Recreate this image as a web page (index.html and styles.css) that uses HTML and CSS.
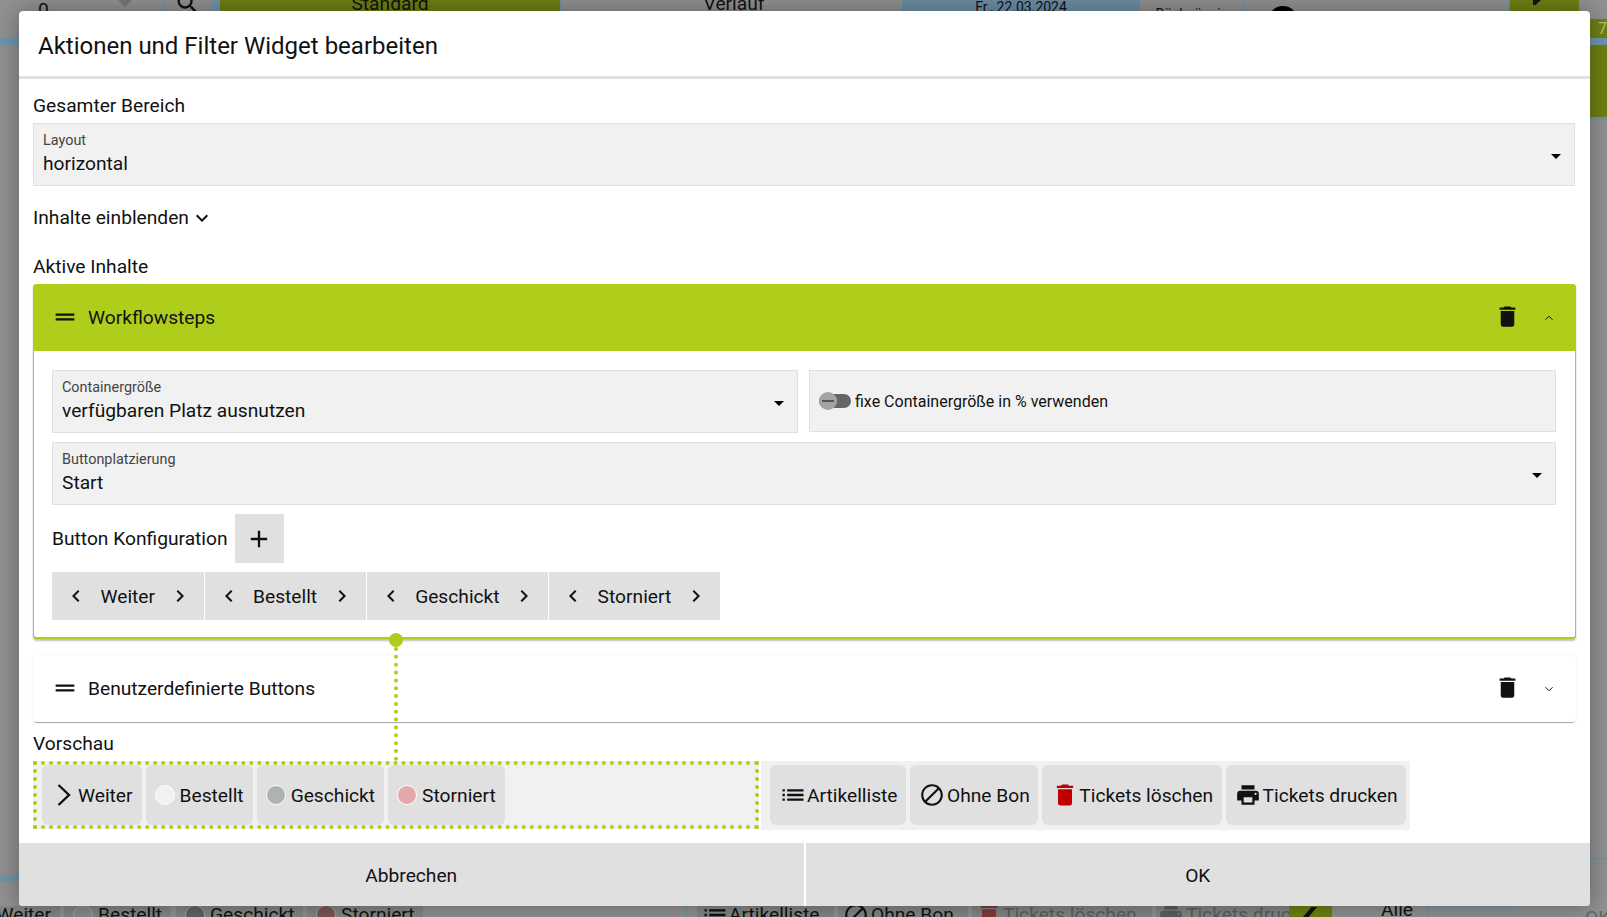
FILE: index.html
```html
<!DOCTYPE html>
<html lang="de">
<head>
<meta charset="utf-8">
<title>Aktionen und Filter Widget bearbeiten</title>
<link rel="stylesheet" href="styles.css">
</head>
<body>
<div class="page">
  <div class="bg-top">
    <div class="bg-cell bg-count">0<span class="bg-tri"></span></div>
    <div class="bg-cell bg-search"><svg class="bg-search-icon" viewBox="0 0 24 24"><path d="M9.5,3A6.5,6.5 0 0,1 16,9.5C16,11.11 15.41,12.59 14.44,13.73L14.71,14H15.5L20.5,19L19,20.5L14,15.5V14.71L13.73,14.44C12.59,15.41 11.11,16 9.5,16A6.5,6.5 0 0,1 3,9.5A6.5,6.5 0 0,1 9.5,3M9.5,5C7,5 5,7 5,9.5C5,12 7,14 9.5,14C12,14 14,12 14,9.5C14,7 12,5 9.5,5Z"/></svg></div>
    <div class="bg-cell bg-standard">Standard</div>
    <div class="bg-cell bg-verlauf">Verlauf</div>
    <div class="bg-cell bg-date">Fr., 22.03.2024</div>
    <div class="bg-cell bg-undo">Rückgängig</div>
    <div class="bg-cell bg-user"><span class="bg-user-head"></span></div>
    <div class="bg-cell bg-edit"><span class="bg-edit-mark"></span></div>
  </div>
  <div class="bg-row-seven"><span class="bg-seven">7</span></div>
  <div class="bg-strip"></div>
  <div class="bg-olive-block"></div>
  <div class="bg-thin"></div>
  <div class="bg-spacer"></div>
  <div class="bg-right-line"></div>
  <div class="bg-left-strip"></div>
  <div class="bg-bottom">
    <span class="bg-chip bg-chip-first">Weiter</span>
    <span class="bg-chip bg-chip-a"><i class="bg-dot bg-dot-a"></i>Bestellt</span>
    <span class="bg-chip bg-chip-b"><i class="bg-dot bg-dot-b"></i>Geschickt</span>
    <span class="bg-chip bg-chip-c"><i class="bg-dot bg-dot-c"></i>Storniert</span>
    <span class="bg-sep"></span>
    <span class="bg-chip bg-chip-list"><svg class="bg-icon-lg" viewBox="0 0 24 24"><path d="M3 13h2v-2H3v2zm0 4h2v-2H3v2zm0-8h2V7H3v2zm4 4h14v-2H7v2zm0 4h14v-2H7v2zM7 7v2h14V7H7z"/></svg>Artikelliste</span>
    <span class="bg-chip bg-chip-bon"><svg class="bg-icon-md" viewBox="0 0 24 24"><path d="M12 2C6.48 2 2 6.48 2 12s4.48 10 10 10 10-4.48 10-10S17.52 2 12 2zM4 12c0-4.42 3.58-8 8-8 1.85 0 3.55.63 4.9 1.69L5.69 16.9C4.63 15.55 4 13.85 4 12zm8 8c-1.85 0-3.55-.63-4.9-1.69L18.31 7.1C19.37 8.45 20 10.15 20 12c0 4.42-3.58 8-8 8z"/></svg>Ohne Bon</span>
    <span class="bg-chip bg-chip-del"><svg class="bg-icon-lg bg-icon-red" viewBox="0 0 24 24"><path d="M19,4H15.5L14.5,3H9.5L8.5,4H5V6H19M6,19A2,2 0 0,0 8,21H16A2,2 0 0,0 18,19V7H6V19Z"/></svg>Tickets löschen</span>
    <span class="bg-chip bg-chip-print"><svg class="bg-icon-md" viewBox="0 0 24 24"><path d="M18,3H6V7H18M19,12A1,1 0 0,1 18,11A1,1 0 0,1 19,10A1,1 0 0,1 20,11A1,1 0 0,1 19,12M16,19H8V14H16M19,8H5A3,3 0 0,0 2,11V17H6V21H18V17H22V11A3,3 0 0,0 19,8Z"/></svg>Tickets drucken</span>
    <span class="bg-pencil"><span class="bg-pencil-mark"></span></span>
    <span class="bg-alle">Alle</span>
    <span class="bg-box"></span>
    <span class="bg-ok">OK</span>
  </div>
</div>

<section class="modal">
  <header class="modal-head">Aktionen und Filter Widget bearbeiten</header>
  <div class="modal-body">
    <div class="section-label first-label">Gesamter Bereich</div>
    <div class="select select-top">
      <div class="select-text">
        <div class="select-label">Layout</div>
        <div class="select-value">horizontal</div>
      </div>
      <span class="caret"></span>
    </div>
    <div class="section-label toggle-line">Inhalte einblenden
      <svg class="icon-down" viewBox="0 0 24 24"><path d="M7.41,8.58L12,13.17L16.59,8.58L18,10L12,16L6,10L7.41,8.58Z"/></svg>
    </div>
    <div class="section-label active-label">Aktive Inhalte</div>

    <article class="panel panel-open">
      <div class="panel-head panel-head-green">
        <svg class="icon-drag" viewBox="0 0 24 24"><path d="M20 9H4v2h16V9zM4 15h16v-2H4v2z"/></svg>
        <span class="panel-title">Workflowsteps</span>
        <svg class="icon-trash" viewBox="0 0 24 24"><path d="M19,4H15.5L14.5,3H9.5L8.5,4H5V6H19M6,19A2,2 0 0,0 8,21H16A2,2 0 0,0 18,19V7H6V19Z"/></svg>
        <svg class="icon-fold" viewBox="0 0 24 24"><path d="M5 15.5L12 8.5L19 15.5"/></svg>
      </div>
      <div class="panel-content">
        <div class="field-row">
          <div class="select">
            <div class="select-text">
              <div class="select-label">Containergröße</div>
              <div class="select-value">verfügbaren Platz ausnutzen</div>
            </div>
            <span class="caret"></span>
          </div>
          <div class="switch-field">
            <span class="switch"><span class="switch-knob"><span class="switch-dash"></span></span></span>
            <span class="switch-text">fixe Containergröße in % verwenden</span>
          </div>
        </div>
        <div class="select">
          <div class="select-text">
            <div class="select-label">Buttonplatzierung</div>
            <div class="select-value">Start</div>
          </div>
          <span class="caret"></span>
        </div>
        <div class="config-row">
          <span class="config-label">Button Konfiguration</span>
          <span class="add-btn"><svg class="icon-plus" viewBox="0 0 24 24"><path d="M19,13H13V19H11V13H5V11H11V5H13V11H19V13Z"/></svg></span>
        </div>
        <div class="order-row">
          <div class="order-chip">
            <svg class="icon-order" viewBox="0 0 24 24"><path d="M15.41,16.58L10.83,12L15.41,7.41L14,6L8,12L14,18L15.41,16.58Z"/></svg><span>Weiter</span><svg class="icon-order" viewBox="0 0 24 24"><path d="M8.59,16.58L13.17,12L8.59,7.41L10,6L16,12L10,18L8.59,16.58Z"/></svg>
          </div>
          <div class="order-chip">
            <svg class="icon-order" viewBox="0 0 24 24"><path d="M15.41,16.58L10.83,12L15.41,7.41L14,6L8,12L14,18L15.41,16.58Z"/></svg><span>Bestellt</span><svg class="icon-order" viewBox="0 0 24 24"><path d="M8.59,16.58L13.17,12L8.59,7.41L10,6L16,12L10,18L8.59,16.58Z"/></svg>
          </div>
          <div class="order-chip">
            <svg class="icon-order" viewBox="0 0 24 24"><path d="M15.41,16.58L10.83,12L15.41,7.41L14,6L8,12L14,18L15.41,16.58Z"/></svg><span>Geschickt</span><svg class="icon-order" viewBox="0 0 24 24"><path d="M8.59,16.58L13.17,12L8.59,7.41L10,6L16,12L10,18L8.59,16.58Z"/></svg>
          </div>
          <div class="order-chip">
            <svg class="icon-order" viewBox="0 0 24 24"><path d="M15.41,16.58L10.83,12L15.41,7.41L14,6L8,12L14,18L15.41,16.58Z"/></svg><span>Storniert</span><svg class="icon-order" viewBox="0 0 24 24"><path d="M8.59,16.58L13.17,12L8.59,7.41L10,6L16,12L10,18L8.59,16.58Z"/></svg>
          </div>
        </div>
      </div>
    </article>

    <article class="panel panel-closed">
      <div class="panel-head">
        <svg class="icon-drag" viewBox="0 0 24 24"><path d="M20 9H4v2h16V9zM4 15h16v-2H4v2z"/></svg>
        <span class="panel-title">Benutzerdefinierte Buttons</span>
        <svg class="icon-trash" viewBox="0 0 24 24"><path d="M19,4H15.5L14.5,3H9.5L8.5,4H5V6H19M6,19A2,2 0 0,0 8,21H16A2,2 0 0,0 18,19V7H6V19Z"/></svg>
        <svg class="icon-fold" viewBox="0 0 24 24"><path d="M5 8.5L12 15.5L19 8.5"/></svg>
      </div>
    </article>

    <div class="section-label preview-label">Vorschau</div>
    <div class="preview">
      <div class="preview-zone">
        <div class="preview-chip preview-chip-weiter">
          <svg class="icon-weiter" viewBox="0 0 14 22"><path d="M1.5 1L12 11L1.5 21"/></svg><span>Weiter</span>
        </div>
        <div class="preview-chip"><i class="status status-light"></i><span>Bestellt</span></div>
        <div class="preview-chip"><i class="status status-gray"></i><span>Geschickt</span></div>
        <div class="preview-chip"><i class="status status-red"></i><span>Storniert</span></div>
      </div>
      <div class="preview-actions">
        <div class="preview-chip preview-chip-tight">
          <svg class="icon-list" viewBox="0 0 24 24"><path d="M3 13h2v-2H3v2zm0 4h2v-2H3v2zm0-8h2V7H3v2zm4 4h14v-2H7v2zm0 4h14v-2H7v2zM7 7v2h14V7H7z"/></svg><span>Artikelliste</span>
        </div>
        <div class="preview-chip preview-chip-tight">
          <svg class="icon-action" viewBox="0 0 24 24"><path d="M12 2C6.48 2 2 6.48 2 12s4.48 10 10 10 10-4.48 10-10S17.52 2 12 2zM4 12c0-4.42 3.58-8 8-8 1.85 0 3.55.63 4.9 1.69L5.69 16.9C4.63 15.55 4 13.85 4 12zm8 8c-1.85 0-3.55-.63-4.9-1.69L18.31 7.1C19.37 8.45 20 10.15 20 12c0 4.42-3.58 8-8 8z"/></svg><span>Ohne Bon</span>
        </div>
        <div class="preview-chip preview-chip-tight">
          <svg class="icon-list icon-red" viewBox="0 0 24 24"><path d="M19,4H15.5L14.5,3H9.5L8.5,4H5V6H19M6,19A2,2 0 0,0 8,21H16A2,2 0 0,0 18,19V7H6V19Z"/></svg><span>Tickets löschen</span>
        </div>
        <div class="preview-chip preview-chip-tight">
          <svg class="icon-action" viewBox="0 0 24 24"><path d="M18,3H6V7H18M19,12A1,1 0 0,1 18,11A1,1 0 0,1 19,10A1,1 0 0,1 20,11A1,1 0 0,1 19,12M16,19H8V14H16M19,8H5A3,3 0 0,0 2,11V17H6V21H18V17H22V11A3,3 0 0,0 19,8Z"/></svg><span>Tickets drucken</span>
        </div>
      </div>
    </div>

    <span class="link-dot"></span>
    <span class="link-line"></span>
  </div>
  <footer class="modal-foot">
    <div class="foot-btn">Abbrechen</div>
    <div class="foot-btn">OK</div>
  </footer>
</section>
</body>
</html>
```

FILE: styles.css
```css
* { box-sizing: border-box; }
html, body { margin: 0; height: 100%; overflow: hidden; }
body {
  font-family: Roboto, "Liberation Sans", sans-serif;
  font-size: 19.2px;
  color: #111;
  background: #919191;
}
svg { display: block; flex: none; fill: currentColor; }

/* page behind the dialog */
.page { height: 917px; display: flex; flex-direction: column; background: #919191; }
.bg-top { height: 19px; flex: none; display: flex; overflow: hidden; padding-left: 163px; position: relative; }
.bg-cell { height: 19px; line-height: 14px; text-align: center; }
.bg-count { position: absolute; left: 0; top: 0; width: 163px; height: 19px; font-size: 19.2px; text-align: left; padding-left: 38px; line-height: 19px; }
.bg-tri { position: absolute; left: 118px; top: 0; border: 7px solid transparent; border-top-color: #777; border-bottom: 0; }
.bg-search { width: 57px; border-left: 3px solid #7096ac; border-right: 8px solid #7096ac; }
.bg-search-icon { width: 28px; height: 28px; margin: -10px 0 0 8px; }
.bg-standard { width: 340px; background: #6f8012; line-height: 8px; }
.bg-verlauf { width: 342px; border-left: 2px solid #7096ac; padding-left: 4px; line-height: 8px; }
.bg-date { width: 238px; background: #6d8ea5; font-size: 14px; line-height: 14px; }
.bg-undo { width: 106px; font-size: 14px; line-height: 28px; border-right: 2px solid #7096ac; }
.bg-user { width: 262px; padding-left: 22px; position: relative; }
.bg-user-head { display: block; width: 30px; height: 30px; margin-top: 6px; border-radius: 50%; background: #000; }
.bg-edit { width: 71px; background: #6f8012; border-left: 2px solid #7096ac; }
.bg-edit-mark { display: block; width: 8px; height: 5px; margin-left: 23px; background: #111; clip-path: polygon(0 0, 100% 0, 30% 100%, 0 100%); }
.bg-row-seven { height: 19px; flex: none; display: flex; justify-content: flex-end; }
.bg-seven { width: 17px; background: #6f8012; color: #b9c27a; font-size: 16px; line-height: 19px; text-align: right; }
.bg-strip { height: 7px; flex: none; background: #7096ac; }
.bg-olive-block { height: 72px; width: 17px; flex: none; align-self: flex-end; background: #6f8012; }
.bg-thin { height: 3px; width: 17px; flex: none; align-self: flex-end; background: #7096ac; }
.bg-spacer { flex: 1; }
.bg-right-line { height: 2px; width: 17px; flex: none; align-self: flex-end; background: #7096ac; margin-bottom: 15px; }
.bg-left-strip { height: 7px; width: 19px; flex: none; background: #7096ac; margin-bottom: 24px; }
.bg-bottom { height: 11px; flex: none; display: flex; overflow: hidden; line-height: 24px; color: #111; }
.bg-chip { flex: none; height: 24px; margin-top: -3px; padding: 0 0 0 9px; background: #858585; margin-right: 4px; white-space: nowrap; display: flex; align-items: center; gap: 5px; }
.bg-chip-first { width: 60px; padding: 0 9px 0 0; justify-content: flex-end; }
.bg-chip-a { width: 106px; margin-right: 6px; }
.bg-chip-b { width: 127px; }
.bg-chip-c { width: 116px; }
.bg-dot { width: 20px; height: 20px; border-radius: 50%; border: 1px solid #9aa; flex: none; }
.bg-dot-a { background: #8b8b8b; }
.bg-dot-b { background: #5f6464; }
.bg-dot-c { background: #7f5555; }
.bg-sep { flex: none; width: 2px; height: 20px; margin: 0 9px 0 259px; background: #7096ac; }
.bg-chip-list { width: 137px; padding-left: 4px; gap: 0; }
.bg-chip-bon { width: 130px; padding-left: 5px; gap: 2px; }
.bg-chip-del { width: 180px; padding-left: 3px; gap: 0; color: #5d5d5d; margin-right: 4px; }
.bg-chip-print { width: 133px; padding-left: 2px; gap: 2px; color: #5d5d5d; margin-right: 0; overflow: hidden; }
.bg-icon-lg { width: 28px; height: 28px; }
.bg-icon-md { width: 26px; height: 26px; }
.bg-icon-red { color: #843a3a; }
.bg-pencil { flex: none; width: 43px; height: 11px; background: #6f8012; }
.bg-pencil-mark { display: block; width: 14px; height: 10px; margin: 1px 0 0 14px; background: #111; clip-path: polygon(60% 0, 100% 0, 40% 100%, 0 100%); }
.bg-alle { flex: none; margin-left: 49px; line-height: 8px; }
.bg-box { flex: none; width: 84px; height: 11px; margin-left: 14px; border: 2px solid #7096ac; border-bottom: 0; }
.bg-ok { flex: none; margin-left: 74px; color: #666; }

/* dialog */
.modal {
  position: absolute;
  left: 19px;
  top: 11px;
  width: 1571px;
  height: 895px;
  display: flex;
  flex-direction: column;
  background: #fff;
  border-radius: 4px;
  box-shadow: 0 0 24px rgba(0, 0, 0, .35);
  overflow: hidden;
}
.modal-head {
  height: 68px;
  flex: none;
  display: flex;
  align-items: center;
  padding: 5px 19px 0;
  font-size: 24px;
  border-bottom: 3px solid #e0e0e0;
}
.modal-body { flex: 1; padding: 0 14px; position: relative; }
.section-label { height: 24px; line-height: 24px; }
.first-label { margin-top: 15px; margin-bottom: 5px; }
.toggle-line { margin-top: 20px; display: flex; align-items: center; gap: 1px; }
.icon-down { width: 24px; height: 24px; }
.active-label { margin-top: 25px; margin-bottom: 5px; }
.preview-label { margin-top: 10px; margin-bottom: 5px; }

.select {
  height: 63px;
  display: flex;
  align-items: center;
  justify-content: space-between;
  padding: 0 13px 0 9px;
  background: #f1f1f1;
  border: 1px solid #e0e0e0;
}
.select-top { margin-right: 1px; }
.select-text { align-self: flex-start; padding-top: 8px; }
.select-label { font-size: 14.4px; line-height: 17px; color: #444; }
.select-value { line-height: 24px; margin-top: 3px; }
.caret { width: 0; height: 0; margin-top: 3px; border: 5px solid transparent; border-top: 5px solid #000; border-bottom: 0; }

.panel { background: #fff; border-radius: 4px; }
.panel-open {
  height: 355px;
  border: 1px solid #afcd1b;
  border-bottom-width: 2px;
  box-shadow: 0 2px 2px rgba(0, 0, 0, .25);
}
.panel-closed {
  height: 67px;
  margin-top: 16px;
  box-shadow: 0 2px 1px -1px rgba(0, 0, 0, .35), 0 0 2px rgba(0, 0, 0, .08);
}
.panel-head { height: 67px; display: flex; align-items: center; padding: 0 17px 0 18px; }
.panel-open .panel-head { margin: -1px -1px 0; width: auto; }
.panel-head-green { background: #afcd1b; border-radius: 4px 4px 0 0; }
.icon-drag { width: 28px; height: 28px; margin-right: 9px; margin-top: -1px; }
.panel-title { flex: 1; }
.icon-trash { width: 27px; height: 27px; margin-right: 22px; margin-top: -2px; }
.icon-fold { width: 12px; height: 12px; fill: none; stroke: #111; stroke-width: 2; margin-right: 4px; }

.panel-content { padding: 19px 19px 0 18px; display: flex; flex-direction: column; gap: 9px; }
.field-row { display: grid; grid-template-columns: 746px 1fr; gap: 11px; }
.switch-field {
  height: 62px;
  display: flex;
  align-items: center;
  gap: 4px;
  padding: 0 9px;
  background: #f1f1f1;
  border: 1px solid #e0e0e0;
}
.switch { position: relative; width: 32px; height: 14px; border-radius: 7px; background: #666; flex: none; }
.switch-knob {
  position: absolute;
  left: 0;
  top: -2px;
  width: 18px;
  height: 18px;
  border-radius: 50%;
  background: #a3a3a3;
  display: flex;
  align-items: center;
  justify-content: center;
}
.switch-dash { width: 12px; height: 2px; background: #555; }
.switch-text { font-size: 16px; }
.config-row { display: flex; align-items: center; gap: 7px; height: 49px; }
.add-btn { width: 49px; height: 49px; background: #e0e0e0; display: flex; align-items: center; justify-content: center; }
.icon-plus { width: 28px; height: 28px; }
.order-row { display: flex; gap: 1px; }
.order-chip { height: 48px; padding: 0 12px; gap: 12.5px; display: flex; align-items: center; background: #e0e0e0; }
.icon-order { width: 24px; height: 24px; margin-top: -1px; }

.preview { display: flex; align-items: flex-start; gap: 2px; }
.preview-zone {
  width: 726px;
  height: 68px;
  display: flex;
  gap: 4px;
  padding-left: 5px;
  background: #f1f1f1;
  border: 4px dotted #afcd1b;
}
.preview-actions {
  height: 69px;
  display: flex;
  gap: 4px;
  padding: 4px 4px 0 9px;
  background: #f1f1f1;
}
.preview-chip {
  height: 60px;
  display: flex;
  align-items: center;
  gap: 5px;
  padding: 0 9px;
  background: #e0e0e0;
  border-radius: 6px;
  white-space: nowrap;
}
.preview-chip span { padding-top: 1px; }
.preview-chip-weiter { padding-left: 15px; gap: 7px; }
.preview-chip-tight { gap: 0; padding: 0 8.5px 0 9px; }
.icon-weiter { width: 14px; height: 22px; fill: none; stroke: #111; stroke-width: 2.4; }
.status { width: 20px; height: 20px; border-radius: 50%; border: 1px solid #fff; flex: none; }
.status-light { background: #f1f1f1; }
.status-gray { background: #aeb2b2; }
.status-red { background: #e3a8ab; }
.icon-list { width: 28px; height: 28px; }
.icon-action { width: 26px; height: 26px; margin-right: 2px; }
.icon-red { color: #c00000; }

.link-dot {
  position: absolute;
  left: 370px;
  top: 554px;
  width: 14px;
  height: 14px;
  border-radius: 50%;
  background: #afcd1b;
}
.link-line {
  position: absolute;
  left: 375px;
  top: 568px;
  height: 114px;
  border-left: 4px dotted #afcd1b;
}

.modal-foot { height: 63px; flex: none; display: flex; gap: 2px; }
.foot-btn { flex: 1; display: flex; align-items: center; justify-content: center; padding-top: 1px; background: #e0e0e0; }
```
